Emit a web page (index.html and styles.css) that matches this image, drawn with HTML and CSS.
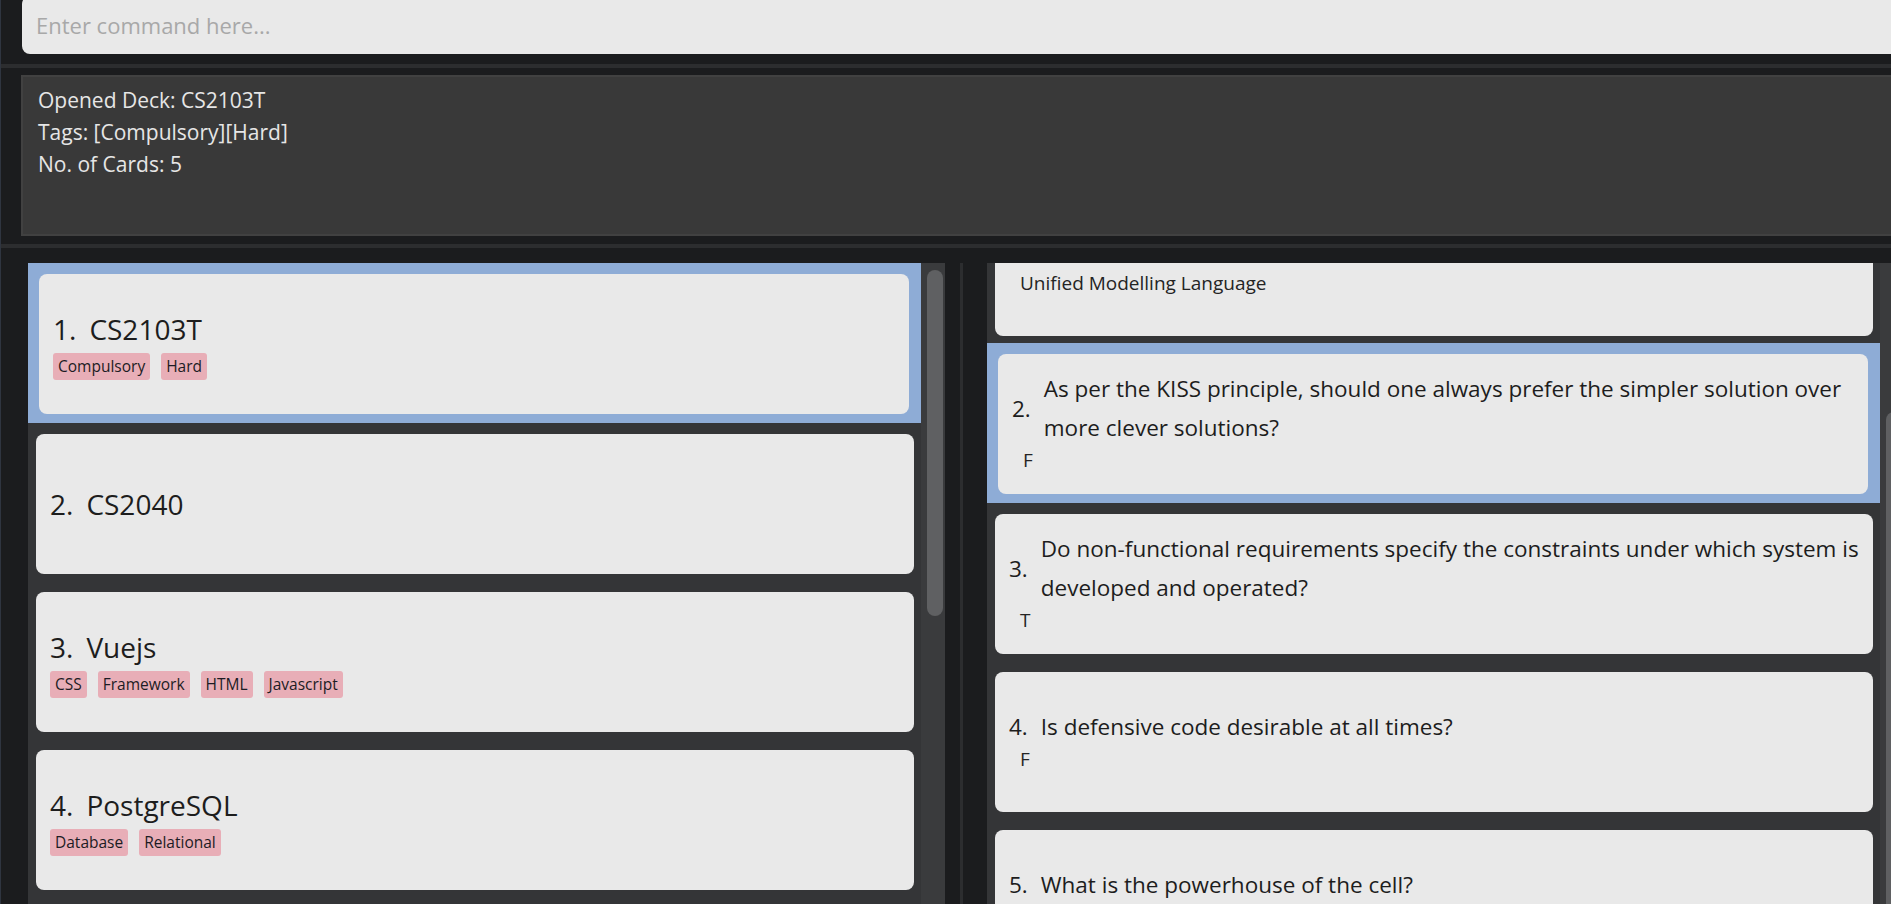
FILE: index.html
```html
<!DOCTYPE html>
<html lang="en">
<head>
<meta charset="utf-8">
<title>Flashcards</title>
<link rel="stylesheet" href="styles.css">
</head>
<body>
<div class="app">
  <div class="command-bar">
    <div class="command-box">Enter command here...</div>
  </div>
  <div class="sep sep-top"></div>
  <div class="result-panel">
    <div>Opened Deck: CS2103T</div>
    <div>Tags: [Compulsory][Hard]</div>
    <div>No. of Cards: 5</div>
  </div>
  <div class="sep sep-mid"></div>
  <div class="lists">
    <div class="pane pane-left">
      <div class="list">
        <div class="cells">
          <div class="cell selected">
            <div class="card deck-card">
              <div class="title"><span class="idx">1.</span><span>CS2103T</span></div>
              <div class="tags"><span class="tag">Compulsory</span><span class="tag">Hard</span></div>
            </div>
          </div>
          <div class="cell">
            <div class="card deck-card">
              <div class="title"><span class="idx">2.</span><span>CS2040</span></div>
            </div>
          </div>
          <div class="cell">
            <div class="card deck-card">
              <div class="title"><span class="idx">3.</span><span>Vuejs</span></div>
              <div class="tags"><span class="tag">CSS</span><span class="tag">Framework</span><span class="tag">HTML</span><span class="tag">Javascript</span></div>
            </div>
          </div>
          <div class="cell">
            <div class="card deck-card">
              <div class="title"><span class="idx">4.</span><span>PostgreSQL</span></div>
              <div class="tags"><span class="tag">Database</span><span class="tag">Relational</span></div>
            </div>
          </div>
        </div>
        <div class="scroll-track"><div class="thumb thumb-left"></div></div>
      </div>
    </div>
    <div class="vdivider"></div>
    <div class="pane pane-right">
      <div class="list">
        <div class="cells cells-scrolled">
          <div class="cell">
            <div class="card q-card">
              <div class="q-row"></div>
              <div class="answer">Unified Modelling Language</div>
            </div>
          </div>
          <div class="cell selected">
            <div class="card q-card">
              <div class="q-row"><span class="q-num">2.</span><span class="q-text">As per the KISS principle, should one always prefer the simpler solution over more clever solutions?</span></div>
              <div class="answer">F</div>
            </div>
          </div>
          <div class="cell">
            <div class="card q-card">
              <div class="q-row"><span class="q-num">3.</span><span class="q-text">Do non-functional requirements specify the constraints under which system is developed and operated?</span></div>
              <div class="answer">T</div>
            </div>
          </div>
          <div class="cell">
            <div class="card q-card">
              <div class="q-row"><span class="q-num">4.</span><span class="q-text">Is defensive code desirable at all times?</span></div>
              <div class="answer">F</div>
            </div>
          </div>
          <div class="cell">
            <div class="card q-card">
              <div class="q-row"><span class="q-num">5.</span><span class="q-text">What is the powerhouse of the cell?</span></div>
              <div class="answer"></div>
            </div>
          </div>
        </div>
        <div class="scroll-track"><div class="thumb thumb-right"></div></div>
      </div>
    </div>
  </div>
</div>
</body>
</html>
```
FILE: styles.css
```css
html, body {
  margin: 0;
  height: 100%;
  overflow: hidden;
  background: #1b1c1e;
}

body {
  font-family: "Open Sans", "Noto Sans", sans-serif;
}

.app {
  width: 1910px;
  height: 904px;
  display: flex;
  flex-direction: column;
  box-sizing: border-box;
  border-left: 1px solid #2f3540;
}

.command-bar {
  height: 54px;
  flex: none;
  padding-left: 21px;
}

.command-box {
  margin-top: -4px;
  height: 58px;
  line-height: 58px;
  background: #e9e9e9;
  border-radius: 8px;
  padding-left: 14px;
  font-size: 22px;
  color: #a8a8a8;
}

.sep {
  flex: none;
  box-sizing: border-box;
}

.sep::before {
  content: "";
  display: block;
  height: 4px;
  background: #2c2d2f;
}

.sep-top {
  height: 21px;
  padding-top: 10px;
}

.sep-mid {
  height: 27px;
  padding-top: 8px;
}

.result-panel {
  flex: none;
  margin-left: 20px;
  height: 161px;
  box-sizing: border-box;
  border: 2px solid #414141;
  border-right: none;
  background: #393939;
  padding: 7px 15px;
  color: #e6e6e6;
  font-size: 21px;
  line-height: 32px;
}

.lists {
  flex: 1;
  min-height: 0;
  display: flex;
}

.pane {
  height: 100%;
  box-sizing: border-box;
}

.pane-left {
  width: 959px;
  padding-left: 27px;
}

.vdivider {
  width: 3px;
  background: #2c2d2f;
  flex: none;
}

.pane-right {
  padding-left: 24px;
}

.list {
  width: 917px;
  height: 100%;
  display: flex;
  background: #343537;
  overflow: hidden;
}

.cells {
  width: 893px;
  flex: none;
}

.cells-scrolled {
  margin-top: -78px;
}

.scroll-track {
  width: 24px;
  flex: none;
  background: #3a3b3d;
  box-sizing: border-box;
  padding: 0 2px 0 6px;
}

.thumb {
  background: #5f6062;
  border-radius: 8px;
}

.thumb-left {
  margin-top: 7px;
  height: 346px;
}

.thumb-right {
  margin-top: 149px;
  height: 600px;
}

.cell {
  padding: 11px 7px 7px 8px;
}

.cell.selected {
  background: #8eacd6;
  padding: 11px 12px 9px 11px;
}

.card {
  height: 140px;
  box-sizing: border-box;
  background: #e9e9e9;
  border-radius: 8px;
  display: flex;
  flex-direction: column;
  justify-content: center;
}

.deck-card {
  padding-left: 14px;
}

.title {
  font-size: 28px;
  line-height: 43px;
  color: #1d1d1d;
  white-space: nowrap;
}

.idx {
  margin-right: 13px;
}

.tags {
  display: flex;
  gap: 11px;
  margin-top: 2px;
}

.tag {
  height: 27px;
  line-height: 27px;
  padding: 0 5px;
  background: #e8aeb7;
  border-radius: 3px;
  font-size: 15.5px;
  color: #1c1c24;
}

.q-card {
  padding-right: 2px;
}

.q-row {
  display: flex;
  align-items: center;
  min-height: 39px;
  padding-left: 14px;
  font-size: 22.5px;
  line-height: 39px;
  color: #1d1d1d;
}

.q-num {
  flex: none;
  margin-right: 13px;
}

.q-text {
  flex: 1;
}

.answer {
  min-height: 26px;
  font-size: 19px;
  line-height: 26px;
  padding-left: 25px;
  margin-bottom: 6px;
  color: #242424;
}
```
